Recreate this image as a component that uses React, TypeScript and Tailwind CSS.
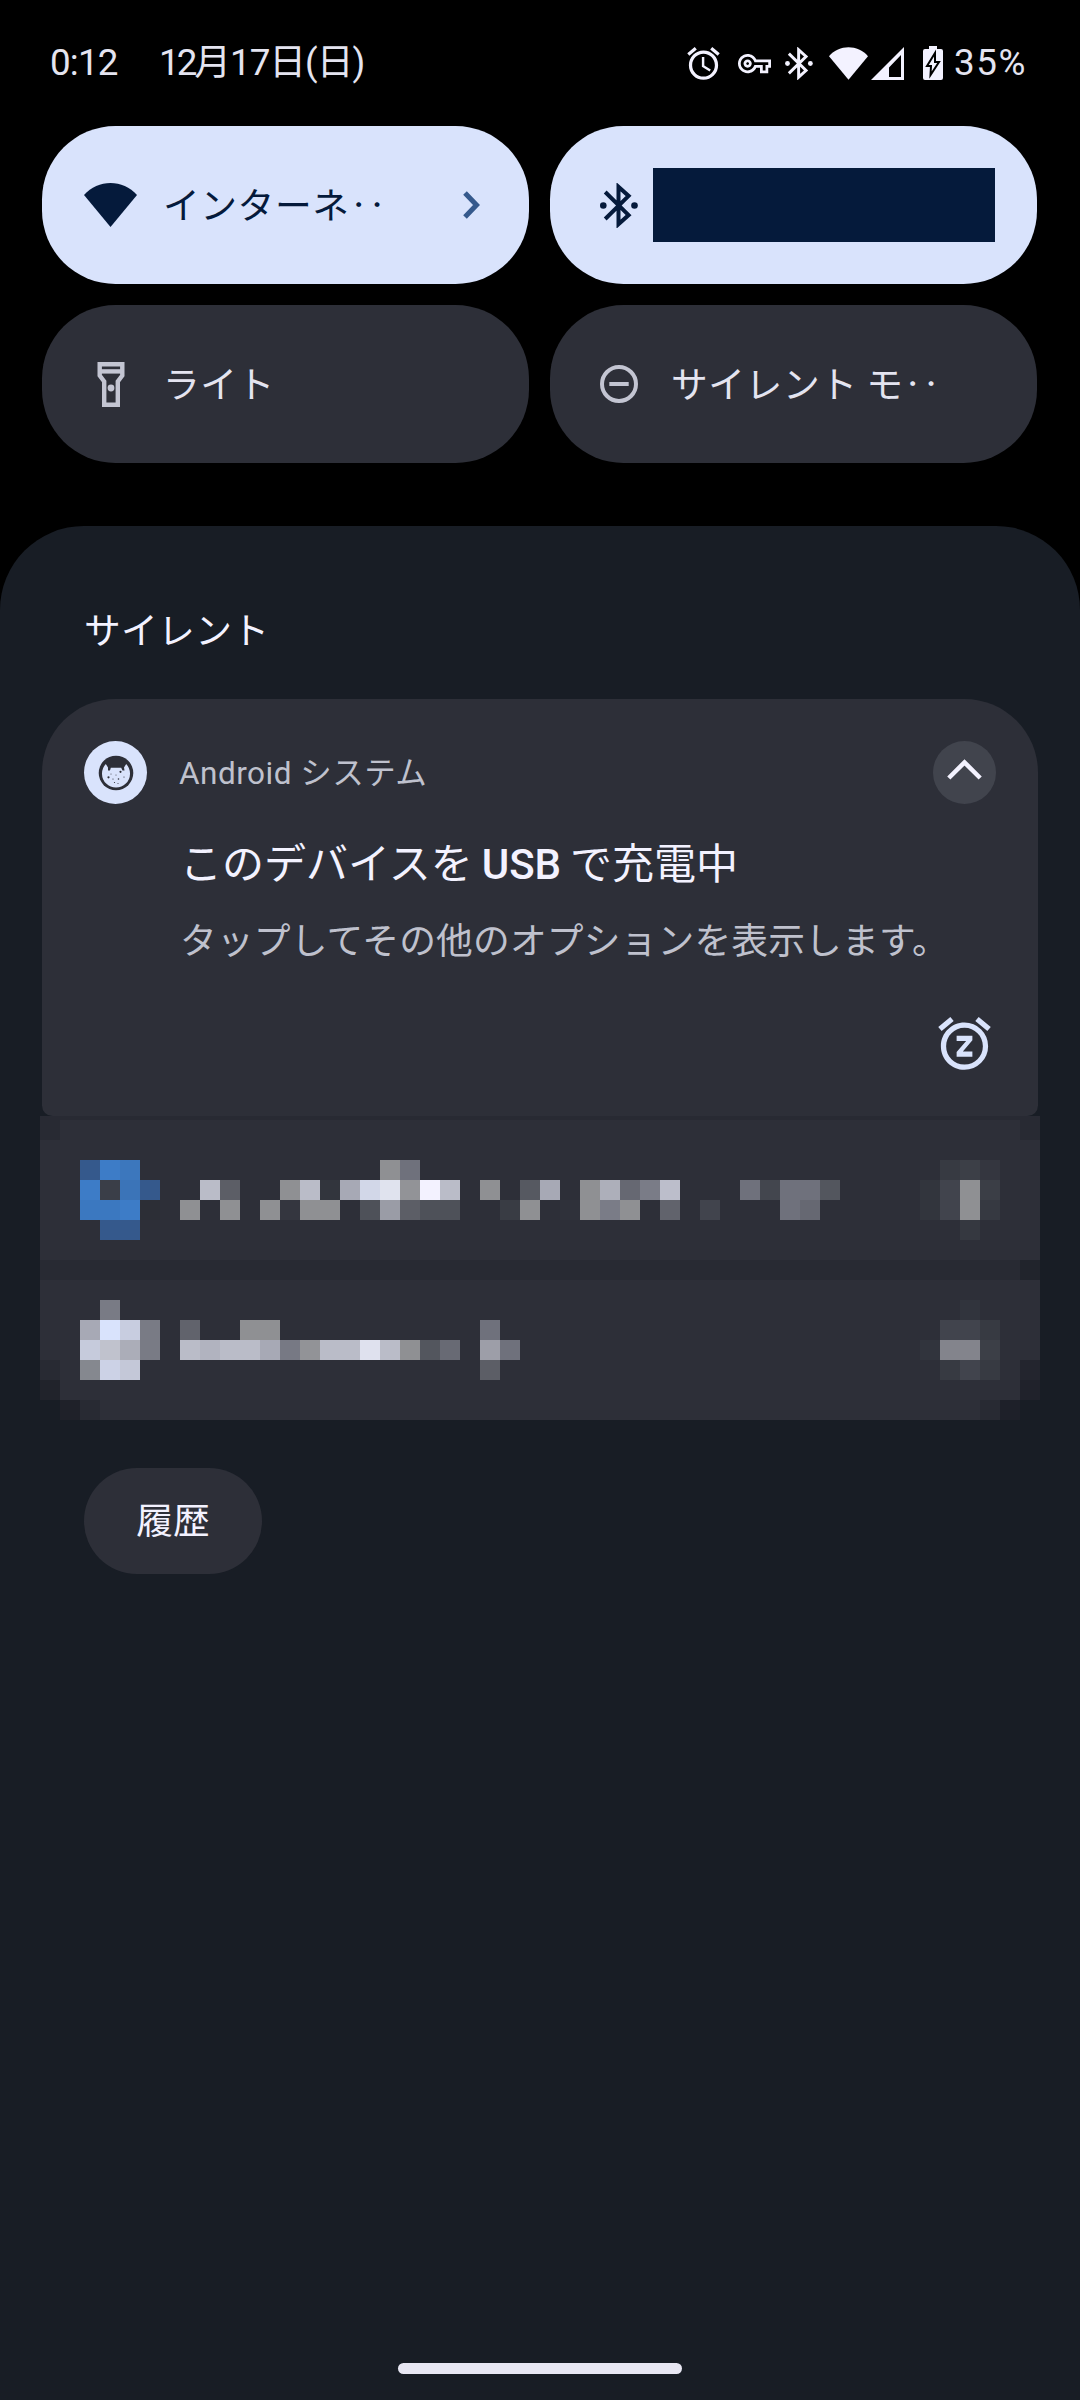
import type { ReactNode } from 'react'
import { MdAlarm, MdOutlineVpnKey, MdSnooze } from 'react-icons/md'

// [column, row, colour, column span]
type Cell = [number, number, string, number?]

const mosaic: Cell[] = [
  [0, 0, '#282a33'], [49, 0, '#282a33'],

  // first notification
  [2, 2, '#35598c'], [3, 2, '#3d7cc7'], [4, 2, '#3c77bd'], [17, 2, '#8f9093'], [18, 2, '#6f717c'],
  [45, 2, '#373a42'], [46, 2, '#3c3f47'], [47, 2, '#34363f'],
  [2, 3, '#3d7cc7'], [3, 3, '#3a3e48'], [4, 3, '#3b74b8'], [5, 3, '#35598c'], [8, 3, '#babcc8'], [9, 3, '#5c5e66'],
  [12, 3, '#8f9093'], [13, 3, '#babcc8'], [14, 3, '#32353d'], [15, 3, '#a7a9b5'], [16, 3, '#d2d7e8'], [17, 3, '#e0e3ee'],
  [18, 3, '#929397'], [19, 3, '#f3f2ff'], [20, 3, '#babcc8'], [22, 3, '#8f9093'], [24, 3, '#565961'], [25, 3, '#a7a9b5'],
  [27, 3, '#8f9093'], [28, 3, '#adafba'], [29, 3, '#666872'], [30, 3, '#7a7c87'], [31, 3, '#bcbecb'],
  [35, 3, '#6f717c'], [36, 3, '#43464e'], [37, 3, '#6f717c', 2], [39, 3, '#53565e'],
  [44, 3, '#32353d'], [45, 3, '#41444d'], [46, 3, '#8f9093'], [47, 3, '#3b3e46'],
  [2, 4, '#3b78c0', 2], [4, 4, '#3d7cc7'], [5, 4, '#2c2e36'], [7, 4, '#8f9093'], [9, 4, '#8f9093'], [11, 4, '#8f9093'],
  [12, 4, '#34363f'], [13, 4, '#8f9093', 2], [16, 4, '#4e5159'], [17, 4, '#9a9ca6'], [18, 4, '#5c5e66'], [19, 4, '#4e5159', 2],
  [23, 4, '#393c44'], [24, 4, '#8f9093'], [26, 4, '#2f313a'], [27, 4, '#8f9093'], [28, 4, '#7a7c87'], [29, 4, '#8f9093'],
  [31, 4, '#61636c'], [33, 4, '#41444d'], [37, 4, '#6f717c'], [38, 4, '#666872'],
  [44, 4, '#32353d'], [45, 4, '#41444d'], [46, 4, '#8f9093'], [47, 4, '#363941'],
  [3, 5, '#35598c', 2], [46, 5, '#353840'],

  [0, 7, '#282a33', 49], [49, 7, '#21242c'],

  // second notification
  [3, 9, '#797b85'], [46, 9, '#31343d'],
  [2, 10, '#a7a9b5'], [3, 10, '#d9e3fc'], [4, 10, '#c8cde0'], [5, 10, '#797b85'], [7, 10, '#61636c'], [10, 10, '#8f9093', 2],
  [22, 10, '#6f717c'], [45, 10, '#41444d', 2], [47, 10, '#373a42'],
  [2, 11, '#c6cbdc'], [3, 11, '#c0c2cd'], [4, 11, '#abadb8'], [5, 11, '#797b85'], [7, 11, '#babcc8'], [8, 11, '#b1b3bf'],
  [9, 11, '#babcc8', 2], [11, 11, '#a7a9b5'], [12, 11, '#777984'], [13, 11, '#929397'], [14, 11, '#babcc8', 2],
  [16, 11, '#dfe1ee'], [17, 11, '#babcc8'], [18, 11, '#8f9093'], [19, 11, '#53565e'], [20, 11, '#686a74'],
  [22, 11, '#9d9ea8'], [23, 11, '#6f717c'], [44, 11, '#31343d'], [45, 11, '#83848c', 2], [47, 11, '#3c3f47'],
  [0, 12, '#282a33'], [2, 12, '#85888f'], [3, 12, '#ccd2e6'], [4, 12, '#c4c8d8'], [22, 12, '#5c5e66'],
  [45, 12, '#373a42'], [46, 12, '#41444d'], [47, 12, '#373a42'], [49, 12, '#23252e'],
  [0, 13, '#21232b'], [49, 13, '#20222b'],
  [0, 14, '#181d25'], [1, 14, '#1f2129'], [2, 14, '#282a33'], [47, 14, '#282a33'], [48, 14, '#1e2029'], [49, 14, '#181d25'],
]

function BluetoothIcon({ className }: { className: string }) {
  return (
    <svg viewBox="0 0 38 45" className={className} fill="none" stroke="currentColor" strokeWidth="4">
      <path d="M5.2 9 L28.6 32.1 L18.5 41.2 V3.8 L28.6 12.9 L5.2 36" />
      <circle cx="3.3" cy="22.5" r="3.3" fill="currentColor" stroke="none" />
      <circle cx="34.5" cy="22.5" r="3.3" fill="currentColor" stroke="none" />
    </svg>
  )
}

function WifiIcon({ className }: { className: string }) {
  return (
    <svg viewBox="0 0 53 44" className={className} fill="currentColor">
      <path d="M0 12 C14 -4 39 -4 53 12 L26.5 44 Z" />
    </svg>
  )
}

function SignalIcon() {
  return (
    <svg viewBox="0 0 33 33" className="ml-[3px] h-[33px] w-[33px]" fill="currentColor" fillRule="evenodd">
      <path d="M33 0 V33 H0 Z M30 8 L18 20.5 V30 H30 Z" />
    </svg>
  )
}

function BatteryIcon() {
  return (
    <svg viewBox="0 0 20 34" className="ml-[19px] h-[34px] w-5" fill="currentColor">
      <path d="M6 0 H14 V3 H18 Q20 3 20 5 V32 Q20 34 18 34 H2 Q0 34 0 32 V5 Q0 3 2 3 H6 Z" />
      <path d="M12 7 L4 20 H8 L7.5 29 L16 16 H12 Z" fill="#f3f2ff" stroke="#000" strokeWidth="2" />
    </svg>
  )
}

function FlashlightIcon() {
  return (
    <svg viewBox="0 0 28 45" className="h-[45px] w-7" fill="none" stroke="currentColor" strokeWidth="4.4">
      <path d="M2.7 2.2 H25.3 V13.5 L20.8 19.5 V42.8 H7.2 V19.5 L2.7 13.5 Z" />
      <path d="M2.7 9.4 H25.3" />
      <circle cx="14" cy="26" r="3.4" fill="currentColor" stroke="none" />
    </svg>
  )
}

function DndIcon() {
  return (
    <svg viewBox="0 0 38 38" className="h-[38px] w-[38px]" fill="none" stroke="currentColor" strokeWidth="4">
      <circle cx="19" cy="19" r="17" />
      <path d="M9.3 19 H28.7" />
    </svg>
  )
}

function CatIcon() {
  return (
    <svg viewBox="0 0 36 36" className="h-9 w-9">
      <circle cx="18" cy="18" r="17.3" fill="#2d2f38" />
      <path
        d="M7.8 9 L10 12.5 V15.5 H12 L12.8 12.8 H23.2 L24.5 15.5 H26.5 L26 12.5 L28.2 9 A14 14 0 1 1 7.8 9 Z"
        fill="#d9e3fc"
      />
      <g fill="#2d2f38">
        <circle cx="10.5" cy="22.3" r="1.1" />
        <circle cx="22.5" cy="16.8" r="1.1" />
        <circle cx="20.5" cy="24" r=".8" />
        <circle cx="15" cy="24" r=".6" />
        <circle cx="26" cy="22" r=".6" />
        <circle cx="16.5" cy="27.5" r=".6" />
        <circle cx="20" cy="28.5" r=".5" />
        <circle cx="13" cy="19" r=".5" />
        <circle cx="18" cy="20" r=".5" />
      </g>
    </svg>
  )
}

function Tile({ active, icon, children }: { active?: boolean; icon: ReactNode; children: ReactNode }) {
  return (
    <div
      className={`flex h-[158px] items-center rounded-[73.5px] px-[42px] ${
        active ? 'bg-[#d9e3fc] text-[#051a3b]' : 'bg-[#2d2f38] text-[#e4e4f0]'
      }`}
    >
      <div className={`flex w-[53px] shrink-0 justify-center ${active ? '' : 'text-[#c3c5d2]'}`}>{icon}</div>
      {children}
    </div>
  )
}

function TileLabel({ children }: { children: ReactNode }) {
  return (
    <span className="ml-[26px] flex-1 pb-1 font-['Noto_Sans_CJK_JP',sans-serif] tracking-[0.55px] whitespace-nowrap">
      {children}
    </span>
  )
}

export default function App() {
  return (
    <div className="flex h-[2400px] w-[1080px] flex-col overflow-hidden bg-black font-['Roboto','Noto_Sans_CJK_JP',sans-serif] text-[36.75px] leading-none">
      {/* Status bar */}
      <div className="flex h-[126px] items-center justify-between pr-[54px] pl-[50px] text-[#e4e4f0]">
        <div className="flex items-center whitespace-nowrap">
          <span className="w-[109px] tracking-[-0.8px]">0:12</span>
          <span className="tracking-[-1px]">
            <span className="tracking-[-3px]">12</span>月17日(日)
          </span>
        </div>
        <div className="flex items-center text-[#f3f2ff]">
          <MdAlarm className="h-[39px] w-[39px]" />
          <MdOutlineVpnKey className="ml-[15px] h-[33px] w-[33px]" />
          <BluetoothIcon className="ml-[14px] h-[33px] w-7" />
          <WifiIcon className="ml-4 h-[33px] w-[39px]" />
          <SignalIcon />
          <BatteryIcon />
          <span className="ml-[11px] w-[72px] tracking-[1.6px] whitespace-nowrap text-[#e4e4f0]">35%</span>
        </div>
      </div>

      {/* Quick settings */}
      <div className="grid grid-cols-[487px_487px] gap-[21px] px-[42px]">
        <Tile active icon={<WifiIcon className="h-11 w-[53px]" />}>
          <TileLabel>インターネ‥</TileLabel>
          <svg viewBox="0 0 17 28" className="mr-[7px] h-7 w-[17px]" fill="none" stroke="#35598c" strokeWidth="5">
            <path d="M2 2 L13.5 14 L2 26" />
          </svg>
        </Tile>
        <Tile active icon={<BluetoothIcon className="h-[45px] w-[38px]" />}>
          <div className="ml-2 h-[74px] w-[342px] shrink-0 bg-[#051a3b]" />
        </Tile>
        <Tile icon={<FlashlightIcon />}>
          <TileLabel>ライト</TileLabel>
        </Tile>
        <Tile icon={<DndIcon />}>
          <TileLabel>サイレント モ‥</TileLabel>
        </Tile>
      </div>

      {/* Notification shade */}
      <div className="mt-[63px] flex flex-1 flex-col rounded-t-[84px] bg-[#181d25] text-[#f3f2ff]">
        <h2 className="mt-[84px] ml-[84px] h-[37px] font-['Noto_Sans_CJK_JP',sans-serif] tracking-[0.3px]">サイレント</h2>

        <div className="mx-[42px] mt-[52px] flex h-[417px] flex-col rounded-t-[73.5px] rounded-b-[10.5px] bg-[#2d2f38] px-[42px] pt-[42px]">
          <div className="flex h-[63px] items-center">
            <div className="flex h-[63px] w-[63px] items-center justify-center rounded-full bg-[#d9e3fc]">
              <CatIcon />
            </div>
            <span className="ml-8 flex-1 pt-[3px] text-[31.5px] tracking-[0.5px] text-[#bfc1cd]">Android システム</span>
            <div className="flex h-[63px] w-[63px] items-center justify-center rounded-full bg-[#41444d]">
              <svg viewBox="0 0 35 21" className="mb-[6px] h-[21px] w-[35px]" fill="none" stroke="#f3f2ff" strokeWidth="4.5">
                <path d="M1.8 19 L17.5 3.4 L33.2 19" />
              </svg>
            </div>
          </div>
          <div className="mt-10 ml-24 text-[42px] [word-spacing:-1.5px]">
            このデバイスを <span className="font-medium">USB</span> で充電中
          </div>
          <div className="mt-[38px] ml-24 tracking-[0.15px] whitespace-nowrap text-[#bfc1cd]">
            タップしてその他のオプションを表示します。
          </div>
          <MdSnooze className="mt-[51px] self-end text-[63px] text-[#d9e3fc]" />
        </div>

        {/* Pixelated notifications */}
        <div className="mx-10 h-1 shrink-0 bg-[#282a33]" />
        <div className="mx-10 grid h-[300px] shrink-0 grid-cols-[repeat(50,20px)] grid-rows-[repeat(15,20px)] bg-[#2d2f38]">
          {mosaic.map(([col, row, color, span = 1]) => (
            <div
              key={`${col}-${row}`}
              style={{ gridColumn: `${col + 1} / span ${span}`, gridRow: row + 1, backgroundColor: color }}
            />
          ))}
        </div>

        <button className="mt-12 ml-[84px] h-[106px] w-[178px] shrink-0 rounded-full bg-[#2d2f38] pt-[3px]">履歴</button>

        {/* Gesture bar */}
        <div className="mt-auto mb-[26px] h-[11px] w-[284px] self-center rounded-full bg-[#e8e7f3]" />
      </div>
    </div>
  )
}
